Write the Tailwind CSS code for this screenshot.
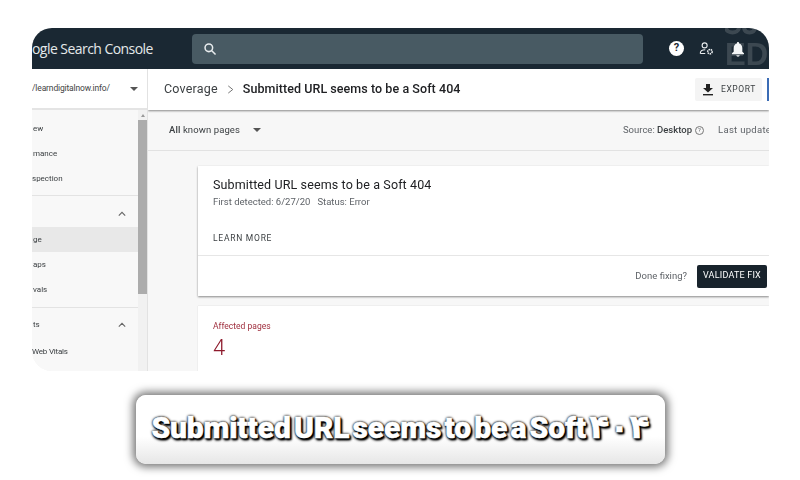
<!DOCTYPE html>
<html lang="en">
<head>
    <meta charset="UTF-8">
    <title>Submitted URL seems to be a Soft 404</title>
    <script src="https://cdn.jsdelivr.net/npm/@tailwindcss/browser@4"></script>
</head>
<body class="bg-white w-[800px] h-[480px] overflow-hidden font-['Roboto',sans-serif]">
    <!-- Search Console window -->
    <div class="ml-[32px] mt-[28px] w-[737px] h-[343px] flex flex-col overflow-hidden rounded-t-[20px] rounded-bl-[20px] bg-[#f7f7f7] blur-[0.3px]">
        <!-- Top bar -->
        <header class="h-[41px] shrink-0 bg-[#1a2833] flex items-center relative">
            <div class="w-[160px] shrink-0 whitespace-nowrap text-[#e4e8ea] text-[14px] font-['Open_Sans',sans-serif] tracking-[-0.55px]">ogle Search Console</div>
            <div class="w-[451px] h-[30px] shrink-0 rounded-[4px] bg-[#485a63] flex items-center pl-[11px]">
                <svg class="w-[14px] h-[14px]" viewBox="0 0 24 24" fill="none" stroke="#e8ecee" stroke-width="2.6"><circle cx="10" cy="10" r="6.5"/><path d="M15 15l6.5 6.5"/></svg>
            </div>
            <div class="ml-[26px] w-[15px] h-[15px] rounded-full bg-white text-[#1a2833] text-[11px] font-bold flex items-center justify-center">?</div>
            <svg class="ml-[15px] w-[15px] h-[15px]" viewBox="0 0 24 24" fill="none" stroke="#e8ecee" stroke-width="1.8"><circle cx="9" cy="7" r="4"/><path d="M2 20c0-4 4-6 8-6"/><path d="M2 20h8"/><circle cx="17.5" cy="17" r="3.5" stroke-width="2.6" stroke-dasharray="2.2 1"/></svg>
            <svg class="ml-[16px] w-[16px] h-[16px] relative z-10" viewBox="0 0 24 24" fill="#f4f6f7"><path d="M12 1.500c-1 0-1.600.7-1.600 1.600v.7C7.300 4.600 5.500 7.300 5.500 10.500V16L3 18.500V20h18v-1.500L18.500 16v-5.500c0-3.200-1.800-5.900-4.900-6.700v-.7c0-.9-.6-1.600-1.600-1.600z"/><path d="M9.500 21.500h5c0 1.300-1.100 2-2.500 2s-2.500-.7-2.500-2z"/></svg>
            <!-- watermark in the corner -->
            <svg class="absolute left-[693px] top-0 w-[44px] h-[8px]" viewBox="0 0 44 8" fill="none" stroke="#ffffff" stroke-opacity="0.15" stroke-width="4"><path d="M1 0c1 6 12 6 13 0"/><path d="M19 0c1 6 10 6 11 0"/></svg>
            <div class="absolute left-[693px] top-[13px] w-[44px] overflow-hidden text-[#ffffff]/15 text-[31px] leading-[28px] font-bold font-['Liberation_Sans',sans-serif] whitespace-nowrap">EDU</div>
        </header>

        <div class="flex flex-1 min-h-0">
            <!-- Sidebar -->
            <aside class="w-[116px] shrink-0 flex flex-col border-r border-[#e2e2e2]">
                <div class="h-[41px] shrink-0 bg-white flex items-center justify-between pr-[9px] border-b-2 border-[#e4e4e4]">
                    <span class="text-[8.500px] whitespace-nowrap text-[#444] tracking-[-0.15px]">/learndigitalnow.info/</span>
                    <span class="w-0 h-0 border-x-[4px] border-x-transparent border-t-[4px] border-t-[#555]"></span>
                </div>
                <div class="flex flex-1 min-h-0 bg-[#f8f8f8]">
                    <nav class="w-[106px] shrink-0 pt-[6px] text-[8px] text-[#3c4043] overflow-hidden">
                        <div class="h-[25px] flex items-center pl-[1px]">ew</div>
                        <div class="h-[25px] flex items-center pl-[1px]">mance</div>
                        <div class="h-[25px] flex items-center">spection</div>
                        <div class="h-[5px] border-b border-[#e3e3e3]"></div>
                        <div class="h-[31px] flex items-center justify-end pr-[12px] pt-[4px]">
                            <svg class="w-[8px] h-[6px]" viewBox="0 0 10 6" fill="none" stroke="#666" stroke-width="1.400"><path d="M1 5l4-4 4 4"/></svg>
                        </div>
                        <div class="h-[25px] flex items-center bg-[#e8e8e8] pl-[1px]">ge</div>
                        <div class="h-[25px] flex items-center pl-[1px] pt-[1px]">aps</div>
                        <div class="h-[25px] flex items-center pl-[1px] pt-[1px]">vals</div>
                        <div class="h-[6px] border-b border-[#e3e3e3]"></div>
                        <div class="h-[34px] flex items-center justify-between pr-[12px] pl-[1px]">
                            <span>ts</span>
                            <svg class="w-[8px] h-[6px]" viewBox="0 0 10 6" fill="none" stroke="#666" stroke-width="1.400"><path d="M1 5l4-4 4 4"/></svg>
                        </div>
                        <div class="h-[19px] flex items-center whitespace-nowrap tracking-[-0.2px]">Web Vitals</div>
                    </nav>
                    <!-- Scrollbar -->
                    <div class="w-[9px] shrink-0 bg-[#f1f1f1] flex flex-col">
                        <div class="h-[10px] flex items-center justify-center">
                            <span class="w-0 h-0 border-x-[2px] border-x-transparent border-b-[3px] border-b-[#999]"></span>
                        </div>
                        <div class="h-[174px] bg-[#acacac]"></div>
                    </div>
                </div>
            </aside>

            <!-- Main -->
            <main class="flex-1 min-w-0 flex flex-col overflow-hidden">
                <div class="h-[41px] shrink-0 bg-white flex items-center pl-[16px] pr-[7px] shadow-[0_1px_2px_rgba(0,0,0,0.45)] relative z-10 whitespace-nowrap">
                    <span class="text-[12.500px] text-[#3c4043] tracking-[0.2px]">Coverage</span>
                    <svg class="ml-[9px] w-[7px] h-[9px]" viewBox="0 0 7 10" fill="none" stroke="#666" stroke-width="1"><path d="M1 1l5 4-5 4"/></svg>
                    <span class="ml-[9px] text-[12.500px] text-[#202124] font-medium tracking-[0.06px]">Submitted URL seems to be a Soft 404</span>
                    <div class="ml-auto w-[67px] h-[23px] bg-[#f4f4f4] rounded-[2px] flex items-center pl-[7px] gap-[7px]">
                        <svg class="w-[12px] h-[12px]" viewBox="0 0 12 12" fill="#222"><path d="M4 0h4v4h3L6 8.500 1 4h3z"/><path d="M1 10h10v1.400H1z"/></svg>
                        <span class="text-[8.500px] text-[#3c4043] tracking-[0.6px]">EXPORT</span>
                    </div>
                    <div class="absolute right-0 top-[9px] w-[2px] h-[23px] bg-[#3b6cb5]"></div>
                </div>

                <div class="h-[41px] shrink-0 flex items-center pl-[21px] border-b border-[#e2e2e2] whitespace-nowrap text-[9.500px] text-[#5f6368]">
                    <span class="text-[#3c4043] tracking-[0.1px]"><span class="font-medium">All</span> known pages</span>
                    <span class="ml-[13px] w-0 h-0 border-x-[4px] border-x-transparent border-t-[4px] border-t-[#555]"></span>
                    <span class="ml-auto">Source: <span class="font-medium text-[#3c4043]">Desktop</span></span>
                    <span class="ml-[3px] w-[9px] h-[9px] rounded-full border border-[#777] text-[6px] leading-none flex items-center justify-center">?</span>
                    <span class="ml-[14px] w-[51px] tracking-[0.3px]">Last update</span>
                </div>

                <div class="pl-[50px] pt-[15px] flex flex-col gap-[10px]">
                    <section class="h-[130px] bg-white shadow-[0_1px_2px_rgba(0,0,0,0.45)] flex flex-col">
                        <div class="h-[90px] px-[15px] pt-[11px] border-b border-[#e6e6e6] whitespace-nowrap">
                            <h2 class="text-[12.500px] leading-[16px] text-[#202124] tracking-[0.12px]">Submitted URL seems to be a Soft 404</h2>
                            <p class="mt-[2px] text-[9.500px] leading-[14px] text-[#5f6368]">First detected: 6/27/20 &nbsp;&nbsp;Status: Error</p>
                            <p class="mt-[23px] text-[8.500px] leading-[12px] text-[#3c4043] tracking-[0.75px]">LEARN MORE</p>
                        </div>
                        <div class="flex-1 flex items-center justify-end pr-[2px] gap-[10px]">
                            <span class="text-[9.500px] text-[#5f6368]">Done fixing?</span>
                            <button class="w-[70px] h-[23px] rounded-[2px] bg-[#18232c] text-white text-[9px] tracking-[0.2px] whitespace-nowrap">VALIDATE FIX</button>
                        </div>
                    </section>
                    <section class="h-[90px] bg-white shadow-[0_0_1px_rgba(0,0,0,0.2)] px-[15px] pt-[15px]">
                        <p class="text-[8.500px] leading-[10px] text-[#a0303f]">Affected pages</p>
                        <p class="mt-[5px] text-[22px] leading-[24px] text-[#8e1a2c] font-light">4</p>
                    </section>
                </div>
            </main>
        </div>
    </div>

    <!-- Caption banner -->
    <div class="ml-[136px] mt-[24px] w-[529px] h-[69px] rounded-[10px] bg-gradient-to-b from-white from-60% to-[#e6e6e6] shadow-[0_0_9px_3px_rgba(0,0,0,0.55)] flex items-center justify-center pb-[5px]">
        <span class="text-[30px] leading-[36px] font-black text-white tracking-[-0.15px] [word-spacing:-4px] whitespace-nowrap [-webkit-text-stroke:0.5px_white] [text-shadow:0_0_3px_#000,1px_2px_3px_#000,0_0_2px_#000,1px_1px_1px_#000,2px_2px_2px_#000] font-['Roboto','DejaVu_Sans',sans-serif]">Submitted URL seems to be a Soft <span class="text-[33px] font-bold font-['DejaVu_Sans',sans-serif] tracking-[-2px]">۴۰۴</span></span>
    </div>
</body>
</html>
